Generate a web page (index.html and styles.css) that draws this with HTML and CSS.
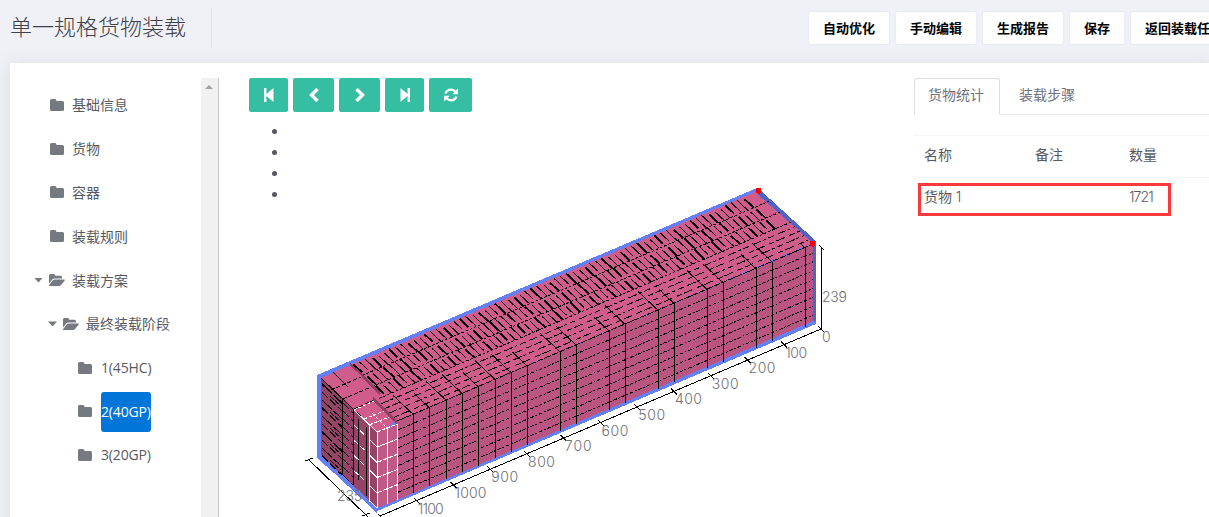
FILE: index.html
```html
<!DOCTYPE html>
<html lang="zh-CN">
<head>
<meta charset="utf-8">
<title>单一规格货物装载</title>
<link rel="stylesheet" href="styles.css">
</head>
<body>
<svg class="defs" width="0" height="0">
  <symbol id="folder" viewBox="0 0 14 12"><path d="M1.5 0H5q1.4 0 1.4 1.5v.4h6.1Q14 1.900 14 3.400v7q0 1.600-1.500 1.600h-11Q0 12 0 10.500v-9Q0 0 1.500 0z"/></symbol>
  <symbol id="open" viewBox="0 0 16 12"><path d="M1.400 0h3.400q1.300 0 1.300 1.500v.3h5.500q1.400 0 1.400 1.500V4.500H5.500Q4 4.500 3 5.700L0 9.400V1.500Q0 0 1.400 0zM5.800 5.400h9.600q1 .1.300 1l-3.400 4.300Q11.300 12 10 12H.6q-1.100-.1-.4-1l3.500-4.400Q4.700 5.400 5.800 5.400z"/></symbol>
</svg>
<header class="top">
  <h1 class="title">单一规格货物装载</h1>
  <nav class="actions">
    <button class="action">自动优化</button><button class="action">手动编辑</button><button class="action">生成报告</button><button class="action">保存</button><button class="action">返回装载任务</button>
  </nav>
</header>
<main class="card">
  <aside class="side">
    <ul class="tree">
      <li class="node"><svg class="folder"><use href="#folder"/></svg><span>基础信息</span></li>
      <li class="node"><svg class="folder"><use href="#folder"/></svg><span>货物</span></li>
      <li class="node"><svg class="folder"><use href="#folder"/></svg><span>容器</span></li>
      <li class="node"><svg class="folder"><use href="#folder"/></svg><span>装载规则</span></li>
      <li class="node parent"><i class="caret"></i><svg class="open"><use href="#open"/></svg><span>装载方案</span></li>
      <li class="node parent deep"><i class="caret"></i><svg class="open"><use href="#open"/></svg><span>最终装载阶段</span></li>
      <li class="node leaf"><svg class="folder"><use href="#folder"/></svg><span class="name">1(45HC)</span></li>
      <li class="node leaf"><svg class="folder"><use href="#folder"/></svg><span class="name chosen">2(40GP)</span></li>
      <li class="node leaf"><svg class="folder"><use href="#folder"/></svg><span class="name">3(20GP)</span></li>
    </ul>
    <div class="scroll"><i class="up"></i></div>
  </aside>
  <section class="view">
    <div class="tools">
      <button class="tool narrow"><svg width="12" height="14" viewBox="0 0 12 14"><path d="M1 0h2.400v6L10.500 0v14L3.400 8v6H1z"/></svg></button>
      <button class="tool"><svg width="12" height="14" viewBox="0 0 12 14"><path class="chev" d="M9.500 1L3.500 7L9.500 13"/></svg></button>
      <button class="tool"><svg width="12" height="14" viewBox="0 0 12 14"><path class="chev" d="M2.500 1L8.500 7L2.500 13"/></svg></button>
      <button class="tool narrow"><svg width="12" height="14" viewBox="0 0 12 14"><path d="M11 0H8.600v6L1.500 0v14l7.100-6v6H11z"/></svg></button>
      <button class="tool wide"><svg width="14" height="14" viewBox="0 0 14 14"><path class="arc" d="M1.400 5.500Q3 1.800 7 1.700Q9.500 1.700 11.300 3.500M12.600 8.500Q11 12.200 7 12.300Q4.500 12.300 2.700 10.500"/><path d="M14 .4v5.800H8.200zM0 13.600V7.800h5.800z"/></svg></button>
    </div>
    <ul class="dots"><li></li><li></li><li></li><li></li></ul>
    <svg class="scene" id="scene" width="570" height="337" viewBox="300 180 570 337"></svg>
  </section>
  <section class="stats">
    <nav class="tabs"><a class="tab on">货物统计</a><a class="tab">装载步骤</a></nav>
    <div class="table">
      <div class="row"><span>名称</span><span>备注</span><span>数量</span></div>
      <div class="row data"><span>货物 <b class="num">1</b></span><span></span><span><b class="num">1721</b></span></div>
      <div class="marker"></div>
    </div>
  </section>
</main>
<script src="scene.js"></script>
</body>
</html>
```
FILE: styles.css
```css
* { box-sizing: border-box; }
body { margin: 0; width: 1209px; height: 517px; overflow: hidden; background: #f0f1f7; color: #575962; font: 14px/21px "Open Sans", "Noto Sans CJK SC", sans-serif; }
ul { list-style: none; margin: 0; padding: 0; }
button { font-family: inherit; border: 0; }
.defs { display: block; }
.top { display: flex; height: 63px; justify-content: space-between; }
.title { width: 212px; height: 40px; margin: 8px 0 0; padding-left: 10px; border-right: 1px solid #e0e2ea; font: 300 22px/35px "Noto Sans CJK SC", sans-serif; color: #3f4047; white-space: nowrap; }
.actions { display: flex; gap: 7px; width: 400px; padding-top: 12px; }
.action { flex: none; height: 32px; padding: 0 14px; border-radius: 2px; background: #fff; color: #000; font: 700 13px/30px "Noto Sans CJK SC", sans-serif; box-shadow: 0 0 1px 1px #e9ebf3; white-space: nowrap; }
.card { display: flex; height: 470px; margin-left: 10px; padding-top: 15px; background: #fff; box-shadow: 0 1px 15px 1px rgba(69, 65, 78, .1); }
.side { display: flex; justify-content: space-between; width: 209px; height: 455px; border-right: 1px solid #c8c8c8; }
.tree { padding: 5px 0 0 40px; }
.node { display: flex; align-items: center; height: 43.8px; white-space: nowrap; }
.node svg { fill: #757980; flex: none; }
.folder { width: 14px; height: 12px; margin-right: 8px; }
.open { width: 16px; height: 12px; margin-right: 7px; }
.parent { margin-left: -16px; }
.deep { margin-left: -2px; }
.leaf { margin-left: 28px; }
.leaf .folder { margin-right: 9px; }
.caret { width: 9px; height: 5px; margin-right: 6px; background: #757980; clip-path: polygon(0 0, 100% 0, 50% 100%); }
.name { height: 40px; line-height: 40px; width: 50px; border-radius: 3px; letter-spacing: -.15px; }
.chosen { margin-top: 1px; background: #0275d8; color: #fff; }
.scroll { width: 17px; background: #f1f1f1; }
.up { display: block; width: 8px; height: 4px; margin: 7px 0 0 4px; background: #a3a3a3; clip-path: polygon(50% 0, 100% 100%, 0 100%); }
.view { width: 695px; flex: none; padding-left: 30px; }
.tools { display: flex; gap: 5px; }
.tool { display: flex; align-items: center; justify-content: center; width: 41px; height: 34px; padding: 0 0 1px; border-radius: 2px; background: #36bea3; }
.narrow { width: 39px; }
.wide { width: 43px; }
.tool svg { fill: #fff; }
.tool .chev, .tool .arc { fill: none; stroke: #fff; stroke-width: 3.4; }
.tool .arc { stroke-width: 2.2; }
.dots { height: 84px; padding: 17px 0 0 23px; }
.dots li { width: 5px; height: 5px; margin-bottom: 16px; border-radius: 50%; background: #575962; }
.scene { display: block; margin: -16px 0 0 51px; shape-rendering: crispEdges; }
.scene text { font: 300 14px Inter, sans-serif; fill: #6f6f75; }
.stats { flex: 1; min-width: 0; overflow: hidden; }
.tabs { display: flex; height: 37px; border-bottom: 1px solid #ebedf2; }
.tab { height: 37px; padding: 0 15px 0 19px; line-height: 34px; color: #6f727d; white-space: nowrap; }
.on { width: 86px; padding: 0 13px; border: 1px solid #dddde4; border-bottom: 0; border-radius: 3px 3px 0 0; background: #fff; line-height: 32px; }
.table { position: relative; margin-top: 20px; }
.row { display: grid; grid-template-columns: 111px 94px 1fr; height: 42px; padding-left: 10px; border-top: 1px solid #f4f5f8; line-height: 38px; }
.num { font: 300 14px Inter, sans-serif; color: #4f575f; letter-spacing: -.9px; }
.marker { position: absolute; left: 4px; top: 48px; width: 253px; height: 33px; border: 3px solid #f83a3c; }
```
FILE: scene.js
```javascript
const parts = [];
const BLACK = '#000', WHITE = '#fff';
const TOP = '#d05c8c', FRONT = '#ba5480', LEFT = '#964368';
const SLOPE = 0.4245;
const poly = (pts, fill) => parts.push(`<polygon points="${pts}" fill="${fill}"/>`);
const line = (x1, y1, x2, y2, color = BLACK, width = 1, dash = '') =>
  parts.push(`<line x1="${x1}" y1="${y1}" x2="${x2}" y2="${y2}" stroke="${color}" stroke-width="${width}" stroke-dasharray="${dash}"/>`);
const text = (x, y, value, length) => parts.push(`<text x="${x}" y="${y}" textLength="${length}">${value}</text>`);
const hash = (i, j) => ((i * 37 + j * 61 + (i * j * 13)) % 17) / 17;

// container shell
poly('317,375 757,188 816,242 816,324 377,511 317,458', '#6480f8');
poly('759,189 816,241 816,321 813,321 813,244 754,192', '#5064c8');

// cargo faces
poly('321,378 350,365 755,192 813,243 397,421 377,432', TOP);
poly('397,421 813,244 813,321 397,500', FRONT);
poly('321,378 377,432 377,508 321,455', LEFT);
poly('377,432 397,424 397,500 377,508', '#bf5a87');

// lengthwise rows on the top face
const edge = (t, x) => 378 + 53 * t - (x - 320 - 57 * t) * 0.428;
const starts = [350, 362, 372, 379];
const limits = [0, .2, .4, .59];
[.2, .4, .59].forEach((t, i) => {
  const x1 = starts[i + 1], x2 = 758 + 55 * t;
  line(x1, edge(t, x1), x2, edge(t, x2), BLACK, 1, '3 1.5');
});
for (let lane = 0; lane < 3; lane++) {
  const t0 = limits[lane], t1 = limits[lane + 1];
  let k = 0;
  for (let x = starts[lane] + 3; x < 748 + lane * 10; x += 5.9, k++) {
    const h = hash(k, lane);
    if (h > .95) continue;
    const a = t0 + (t1 - t0) * (h < .5 ? .04 : .18);
    const b = t0 + (t1 - t0) * (h < .2 ? .8 : 1);
    const dx = 57 * (b - a), xa = x + 57 * (a - t0);
    line(xa, edge(a, xa), xa + dx, edge(b, xa + dx), BLACK, k % 3 === 0 ? 2 : 1);
  }
}
for (let j = 1; j < 5; j++) {
  const t = .59 + j * .082;
  const x1 = 376 + j * 4.4;
  line(x1, edge(t, x1), 758 + 55 * t, edge(t, 758 + 55 * t), BLACK, 1, j % 2 ? '9 2 3 3 6 4' : '6 2 9 5');
}

// columns and layers on the front face
const columns = [413, 429, 446, 462, 478, 495, 511, 527, 560, 576, 609, 625, 658, 674, 707, 723, 756, 772, 805];
columns.forEach((x, i) => {
  const y = 421 - (x - 397) * SLOPE;
  line(x + .5, y, x + .5, y + 79);
  const d = i % 3 === 1 ? 15 : 20;
  if (i < 18) line(x, y, x - d, y - d * .94, BLACK, 1);
  else line(x, y, x - 4, y - 4);
});
line(397, 421, 813, 244, BLACK, 1, '7 1');
for (let r = 1; r < 9; r++) line(398, 421 + r * 8.9, 813, 244 + r * 8.9, BLACK, 1, '4 1.5 2 1.5');

// lowered corner of the load
line(321, 378, 377, 432);
line(333, 372, 348, 387);
line(343, 399, 371, 387, BLACK, 1, '4 2');
line(331, 390, 361, 377, BLACK, 1, '4 2');
line(354, 409, 374, 400, BLACK, 1, '4 2');
poly('350,363 362,373 362,376 350,366', '#8c4062');
poly('362,374 380,392 380,396 362,377', '#8c4062');
poly('373,397 397,420 397,425 373,401', '#8c4062');

// short side
for (let r = 0; r < 10; r++) {
  const y = 384 + r * 8;
  line(322, y, 342, y + 19, BLACK, r % 3 === 0 ? 1.6 : 1, r % 2 ? '8 3' : '14 2');
  if (r % 2) line(330, y + 4, 341, y + 14, BLACK, 1, '5 2');
  line(343, y + 19, 353, y + 29, BLACK, 1, '9 2');
}
line(342.5, 399, 342.5, 475, BLACK, 1);
line(353.5, 410, 353.5, 485, BLACK, 1);
poly('321,456 377,509 377,513 318,458', '#6480f8');
line(358.5, 419, 358.5, 480, BLACK, 1);
line(366.5, 427, 366.5, 496, BLACK, 1);

// highlighted boxes
line(354, 410, 377, 432, WHITE);
line(354, 410, 374, 401, WHITE, 1, '3 2');
line(364, 419, 384, 411, WHITE, 1, '3 2');
line(372, 413, 387, 428, WHITE, 1, '4 1');
line(369, 425, 389, 417, WHITE, 1, '4 1');
line(377, 432, 397, 424, WHITE, 1, '4 1');
[369.5, 377.5, 387.5, 397.5].forEach((x, i) => line(x, [426, 432, 428, 424][i], x, [502, 508, 504, 500][i], WHITE));
for (let r = 1; r < 6; r++) {
  const y = 432 + r * 15.2;
  if (r < 5) line(377, y, 397, y - 8, WHITE, 1, '5 1');
  line(369, y - 8, 377, y, WHITE);
  if (r < 5) line(354, y - 22, 366, y - 11, WHITE, 1, '6 2');
}

// handles at the container corners
[[758.5, 190.5], [812.5, 243.5]].forEach(([x, y]) =>
  poly(`${x - 3},${y - 2} ${x - 1},${y - 3} ${x + 2},${y - 3} ${x + 3},${y} ${x + 2},${y + 3} ${x - 1},${y + 3} ${x - 3},${y + 2}`, '#f00000'));

// rulers
line(821.5, 247, 821.5, 329);
line(819, 245, 824, 250);
line(380, 516, 821, 329);
line(308, 459, 368, 517);
line(305, 461, 313, 458);
line(362, 516, 370, 513);
for (let n = 0; n < 12; n++) {
  const x = 821 - 36.75 * n, y = 329 + 15.6 * n;
  line(x - 3, y - 3, x + 3, y + 3);
  const len = n === 0 ? 9 : n === 1 ? 22 : n < 10 ? 27 : n === 10 ? 32 : 26;
  text(x + 1, y + 13, n * 100, len);
}
line(378, 514, 383, 519);
text(822, 302, '239', 25);
text(337, 501, '235', 25);

document.getElementById('scene').innerHTML = parts.join('');
```
